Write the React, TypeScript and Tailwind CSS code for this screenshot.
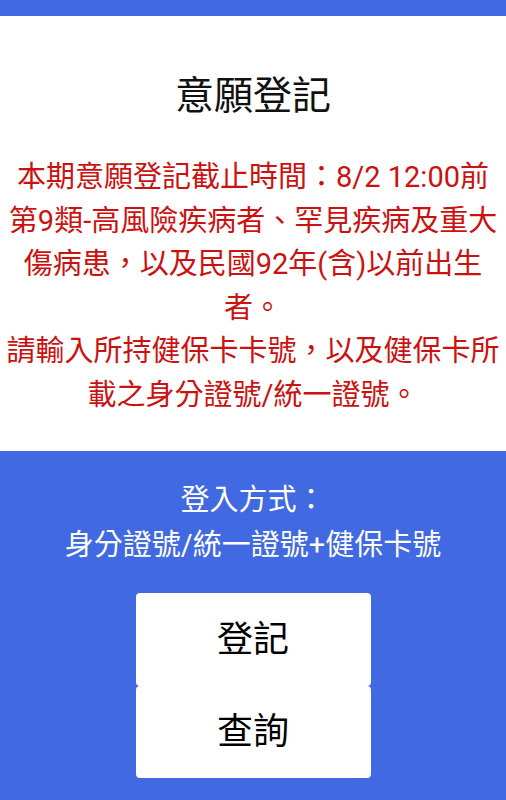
import React from 'react';

const font = { fontFamily: 'Roboto, "Noto Sans CJK TC", sans-serif' };

export default function App() {
  return (
    <div className="min-h-screen w-full bg-[#4169e1]" style={font}>
      <div className="h-[16px] bg-[#4169e1]" />

      <section className="bg-white px-[4px] pt-[52px] pb-[34px] text-center">
        <h1 className="text-[39px] leading-[57px] font-normal text-[#111]">意願登記</h1>
        <div className="mt-[31px] text-[29px] leading-[43.5px] text-[#cc1111]">
          <p>本期意願登記截止時間：8/2 12:00前</p>
          <p>第9類-高風險疾病者、罕見疾病及重大傷病患，以及民國92年(含)以前出生者。</p>
          <p>請輸入所持健保卡卡號，以及健保卡所載之身分證號/統一證號。</p>
        </div>
      </section>

      <section className="bg-[#4169e1] pt-[27px] pb-[23px] text-center">
        <div className="text-[29px] leading-[45px] text-white">
          <p>登入方式：</p>
          <p>身分證號/統一證號+健保卡號</p>
        </div>
        <div className="mt-[25px] flex flex-col items-center">
          <button
            type="button"
            className="w-[235px] h-[93px] rounded-[4px] bg-white text-[36px] text-black"
          >
            登記
          </button>
          <button
            type="button"
            className="w-[235px] h-[92px] rounded-[4px] bg-white text-[36px] text-black"
          >
            查詢
          </button>
        </div>
      </section>
    </div>
  );
}
